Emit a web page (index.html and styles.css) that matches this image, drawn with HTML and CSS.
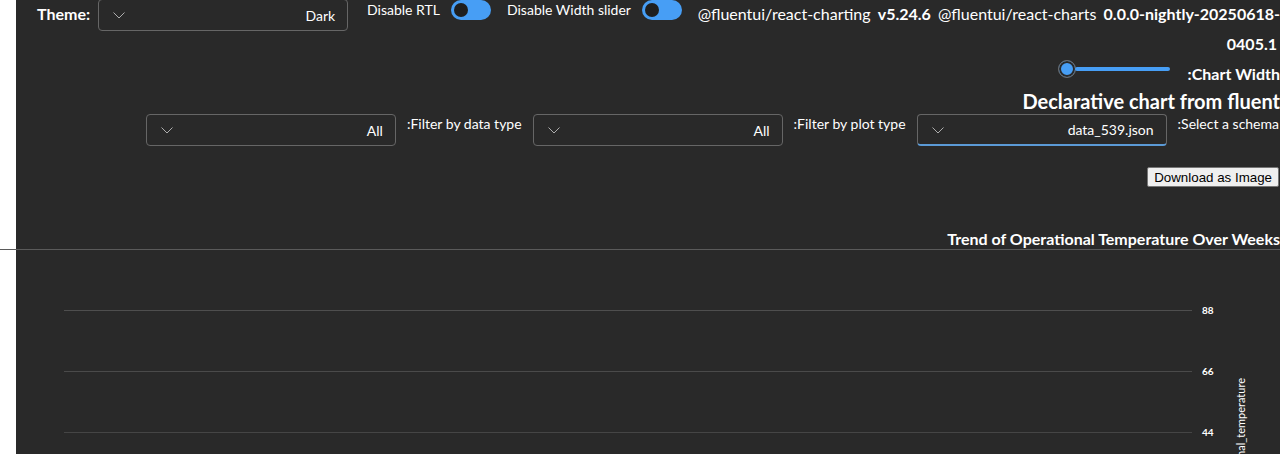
FILE: index.html
```html
<!DOCTYPE html>
<html>
<head>
<meta charset="utf-8">
<link rel="stylesheet" href="styles.css">
</head>
<body>
<div class="page">
  <div class="top-row">
    <span class="theme-label">Theme:</span>
    <div class="dropdown theme-dd">
      <svg class="chev" width="12" height="12" viewBox="0 0 12 12"><path d="M0.5 3.5 L6 9 L11.5 3.5" fill="none" stroke="#adadad" stroke-width="1"/></svg>
      <span class="dd-value">Dark</span>
    </div>
    <span class="switch-label">Disable RTL</span>
    <span class="toggle"><span class="knob"></span></span>
    <span class="switch-label">Disable Width slider</span>
    <span class="toggle"><span class="knob"></span></span>
    <div class="versions">
      <span class="nw">@fluentui/react-charting</span> <b class="nw">v5.24.6</b> <span class="nw">@fluentui/react-charts</span> <b><span class="nw">0.0.0-nightly-20250618-</span><wbr><span class="nw">0405.1</span></b>
    </div>
  </div>

  <div class="width-row">
    <div class="slider"><span class="thumb"></span><span class="track"></span></div>
    <span class="bold-label">:Chart Width</span>
  </div>

  <h2 class="main-title">Declarative chart from fluent</h2>

  <div class="filter-row">
    <div class="dropdown">
      <svg class="chev" width="12" height="12" viewBox="0 0 12 12"><path d="M0.5 3.5 L6 9 L11.5 3.5" fill="none" stroke="#adadad" stroke-width="1"/></svg>
      <span class="dd-value">All</span>
    </div>
    <span class="filter-label">:Filter by data type</span>
    <div class="dropdown">
      <svg class="chev" width="12" height="12" viewBox="0 0 12 12"><path d="M0.5 3.5 L6 9 L11.5 3.5" fill="none" stroke="#adadad" stroke-width="1"/></svg>
      <span class="dd-value">All</span>
    </div>
    <span class="filter-label">:Filter by plot type</span>
    <div class="dropdown focused">
      <svg class="chev" width="12" height="12" viewBox="0 0 12 12"><path d="M0.5 3.5 L6 9 L11.5 3.5" fill="none" stroke="#adadad" stroke-width="1"/></svg>
      <span class="dd-value">data_539.json</span>
    </div>
    <span class="filter-label">:Select a schema</span>
  </div>

  <div class="button-row">
    <button class="download">Download as Image</button>
  </div>

  <div class="chart-title">Trend of Operational Temperature Over Weeks</div>
  <div class="divider"></div>

  <svg class="chart" width="1264" height="204" viewBox="0 0 1264 204">
    <line x1="48" y1="60.5" x2="1176" y2="60.5" stroke="#4e4e4e" stroke-width="1"/>
    <line x1="48" y1="121.5" x2="1176" y2="121.5" stroke="#4a4a4a" stroke-width="1"/>
    <line x1="48" y1="182.5" x2="1176" y2="182.5" stroke="#454545" stroke-width="1"/>
    <text class="tick" x="1186" y="64">88</text>
    <text class="tick" x="1186" y="125">66</text>
    <text class="tick" x="1186" y="186">44</text>
    <text class="axis-title" transform="translate(1229 128) rotate(-90)" text-anchor="end">operational_temperature</text>
  </svg>
</div>
</body>
</html>
```

FILE: styles.css
```css
html, body {
  margin: 0;
  padding: 0;
  background: #ffffff;
  height: 100%;
  overflow: hidden;
}

.page {
  margin-left: 16px;
  height: 454px;
  background: #292929;
  color: #ffffff;
  font-family: "Segoe UI", Lato, "Noto Sans", sans-serif;
  font-size: 14px;
}

.top-row {
  display: flex;
  align-items: flex-start;
  padding-left: 21px;
  height: 60px;
}

.theme-label {
  font-size: 16px;
  font-weight: 700;
  line-height: 28px;
  margin-right: 8px;
}

.dropdown {
  box-sizing: border-box;
  width: 250px;
  height: 32px;
  border: 1px solid #666666;
  border-radius: 4px;
  display: flex;
  align-items: center;
  justify-content: space-between;
  padding: 0 12px 0 14px;
  flex: none;
}

.theme-dd {
  margin-top: -1px;
}

.dd-value {
  color: #ffffff;
  font-size: 14px;
}

.chev {
  display: block;
}

.focused {
  border-bottom: 2px solid #5b9ad6;
}

.switch-label {
  line-height: 20px;
  margin-left: 19px;
  margin-right: 11px;
}

.switch-label + .toggle + .switch-label {
  margin-left: 16px;
}

.toggle {
  box-sizing: border-box;
  width: 40px;
  height: 20px;
  border-radius: 10px;
  background: #479ef5;
  display: flex;
  align-items: center;
  padding-left: 3px;
  flex: none;
}

.knob {
  width: 14px;
  height: 14px;
  border-radius: 50%;
  background: #1f1f1f;
}

.versions {
  flex: 1;
  margin-left: 8px;
  text-align: right;
  font-size: 16px;
  line-height: 30px;
  margin-top: -1px;
}

.nw {
  white-space: nowrap;
}

.versions b {
  font-weight: 700;
  margin-left: 3px;
}

.versions span + b {
  margin-right: 3px;
}

.width-row {
  display: flex;
  justify-content: flex-end;
  align-items: flex-start;
  height: 24px;
}

.slider {
  width: 112px;
  height: 18px;
  display: flex;
  align-items: center;
  margin-right: 18px;
}

.thumb {
  box-sizing: border-box;
  width: 18px;
  height: 18px;
  border-radius: 50%;
  background: #479ef5;
  border: 1px solid #6b6b6b;
  box-shadow: inset 0 0 0 2px #292929;
  flex: none;
}

.track {
  flex: 1;
  height: 4px;
  background: #479ef5;
  border-radius: 2px;
  margin-left: -1px;
}

.bold-label {
  font-size: 16px;
  font-weight: 700;
  line-height: 20px;
  padding-top: 4px;
  white-space: nowrap;
}

.main-title {
  margin: 4px 0 0 0;
  font-size: 20px;
  font-weight: 700;
  line-height: 26px;
  text-align: right;
  white-space: nowrap;
}

.filter-row {
  display: flex;
  justify-content: flex-end;
  align-items: flex-start;
  margin-right: 1px;
  height: 32px;
}

.filter-label {
  line-height: 20px;
  margin-left: 11px;
  margin-right: 11px;
  white-space: nowrap;
}

.filter-row .filter-label:last-child {
  margin-right: 0;
}

.button-row {
  display: flex;
  justify-content: flex-end;
  margin-top: 21px;
  margin-right: 1px;
  height: 20px;
}

.download {
  font-family: "Liberation Sans", Arial, sans-serif;
  font-size: 13.333px;
  height: 20px;
  padding: 1px 6px;
  background: #efefef;
  color: #000000;
  border: 1px solid #767676;
  border-radius: 2px;
}

.chart-title {
  margin-top: 42px;
  font-size: 16px;
  font-weight: 700;
  line-height: 20px;
  text-align: right;
  white-space: nowrap;
}

.divider {
  height: 1px;
  background: #5a5a5a;
  margin-left: -16px;
}

.chart {
  display: block;
}

.tick {
  fill: #ffffff;
  font-family: "Segoe UI", Lato, "Noto Sans", sans-serif;
  font-size: 10px;
  font-weight: 700;
}

.axis-title {
  fill: #ffffff;
  font-family: "Segoe UI", Lato, "Noto Sans", sans-serif;
  font-size: 11px;
}
```
